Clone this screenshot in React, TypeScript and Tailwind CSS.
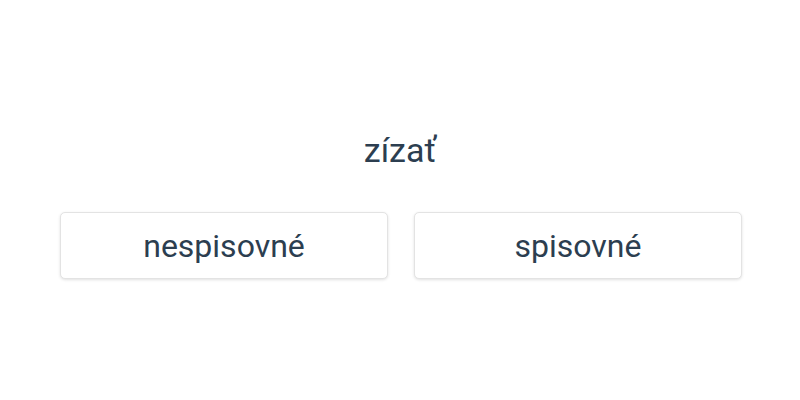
import React from "react";

const options = ["nespisovné", "spisovné"];

export default function App() {
  return (
    <div
      className="w-[800px] h-[400px] bg-white text-[#2c3e50] flex flex-col items-center"
      style={{ fontFamily: "Roboto, 'Noto Sans', sans-serif" }}
    >
      <div className="mt-[128px] h-[44px] flex items-center text-[34px] leading-none">zízať</div>
      <div className="mt-[40px] ml-[2px] w-[682px] grid grid-cols-2 gap-[26px]">
        {options.map((o) => (
          <button
            key={o}
            className="h-[67px] rounded-[5px] border border-[#e3e3e3] bg-white shadow-[0_1px_3px_rgba(0,0,0,0.12)] text-[32px] text-[#2c3e50] flex items-center justify-center"
          >
            {o}
          </button>
        ))}
      </div>
    </div>
  );
}
